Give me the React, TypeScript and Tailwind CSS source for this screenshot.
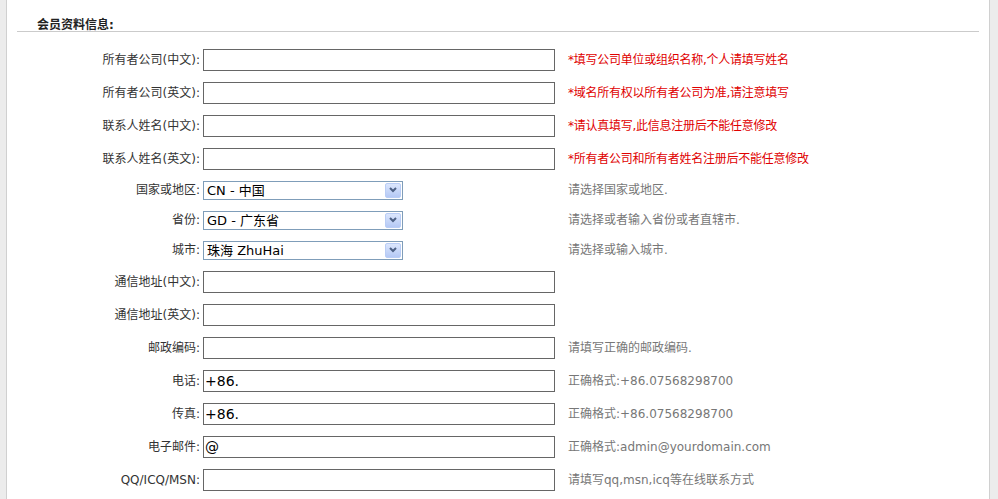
const font = { fontFamily: '"DejaVu Sans", "Noto Sans CJK SC", sans-serif' };

type Row =
  | { kind: 'input'; label: string; value?: string; hint?: string; red?: boolean }
  | { kind: 'select'; label: string; value: string; hint: string };

const rows: Row[] = [
  { kind: 'input', label: '所有者公司(中文):', hint: '*填写公司单位或组织名称,个人请填写姓名', red: true },
  { kind: 'input', label: '所有者公司(英文):', hint: '*域名所有权以所有者公司为准,请注意填写', red: true },
  { kind: 'input', label: '联系人姓名(中文):', hint: '*请认真填写,此信息注册后不能任意修改', red: true },
  { kind: 'input', label: '联系人姓名(英文):', hint: '*所有者公司和所有者姓名注册后不能任意修改', red: true },
  { kind: 'select', label: '国家或地区:', value: 'CN - 中国', hint: '请选择国家或地区.' },
  { kind: 'select', label: '省份:', value: 'GD - 广东省', hint: '请选择或者输入省份或者直辖市.' },
  { kind: 'select', label: '城市:', value: '珠海 ZhuHai', hint: '请选择或输入城市.' },
  { kind: 'input', label: '通信地址(中文):' },
  { kind: 'input', label: '通信地址(英文):' },
  { kind: 'input', label: '邮政编码:', hint: '请填写正确的邮政编码.' },
  { kind: 'input', label: '电话:', value: '+86.', hint: '正确格式:+86.07568298700' },
  { kind: 'input', label: '传真:', value: '+86.', hint: '正确格式:+86.07568298700' },
  { kind: 'input', label: '电子邮件:', value: '@', hint: '正确格式:admin@yourdomain.com' },
  { kind: 'input', label: 'QQ/ICQ/MSN:', hint: '请填写qq,msn,icq等在线联系方式' },
];

function FakeSelect({ value }: { value: string }) {
  return (
    <div className="flex h-[19px] w-[200px] items-center justify-between border border-[#7f9db9] bg-white pl-[3px] pr-[1px]">
      <span className="text-[13px] leading-none text-black">{value}</span>
      <span className="flex h-[15px] w-[16px] items-center justify-center rounded-[2px] border border-[#b9cdf6] bg-gradient-to-b from-[#dbe6fd] to-[#b5c9f5]">
        <svg width="8" height="6" viewBox="0 0 8 6">
          <path d="M1 1 L4 4 L7 1" stroke="#4d6185" strokeWidth="2" fill="none" />
        </svg>
      </span>
    </div>
  );
}

export default function App() {
  return (
    <div className="min-h-[499px] w-[998px] overflow-hidden bg-[#ececec]" style={font}>
      <div className="ml-[6px] min-h-[499px] w-[984px] border-x border-[#d0d0d0] bg-white">
        <div className="mx-[10px]">
          <div className="h-[32px] border-b border-[#cbcbcb] pl-[20px] pt-[12px]">
            <span className="text-[12px] font-bold leading-none text-[#222]">会员资料信息:</span>
          </div>
          <div className="pt-[11px]">
            {rows.map((r) => (
              <div
                key={r.label}
                className={`flex items-center ${r.kind === 'select' ? 'h-[30px]' : 'h-[33px]'}`}
              >
                <div className="w-[184px] pr-[1px] text-right text-[12px] text-[#333]">{r.label}</div>
                <div className="ml-[2px]">
                  {r.kind === 'select' ? (
                    <FakeSelect value={r.value} />
                  ) : (
                    <input
                      defaultValue={r.value ?? ''}
                      className="block h-[22px] w-[352px] border border-[#666] bg-white px-[1px] text-[14px] text-black outline-none"
                      style={font}
                    />
                  )}
                </div>
                {r.hint && (
                  <div
                    className={`text-[12px] ${r.kind === 'select' ? 'ml-[165px]' : 'ml-[13px]'} ${
                      r.kind === 'input' && r.red ? 'tracking-[-0.25px] text-[#e00000]' : 'text-[#777]'
                    }`}
                  >
                    {r.hint}
                  </div>
                )}
              </div>
            ))}
          </div>
        </div>
      </div>
    </div>
  );
}
